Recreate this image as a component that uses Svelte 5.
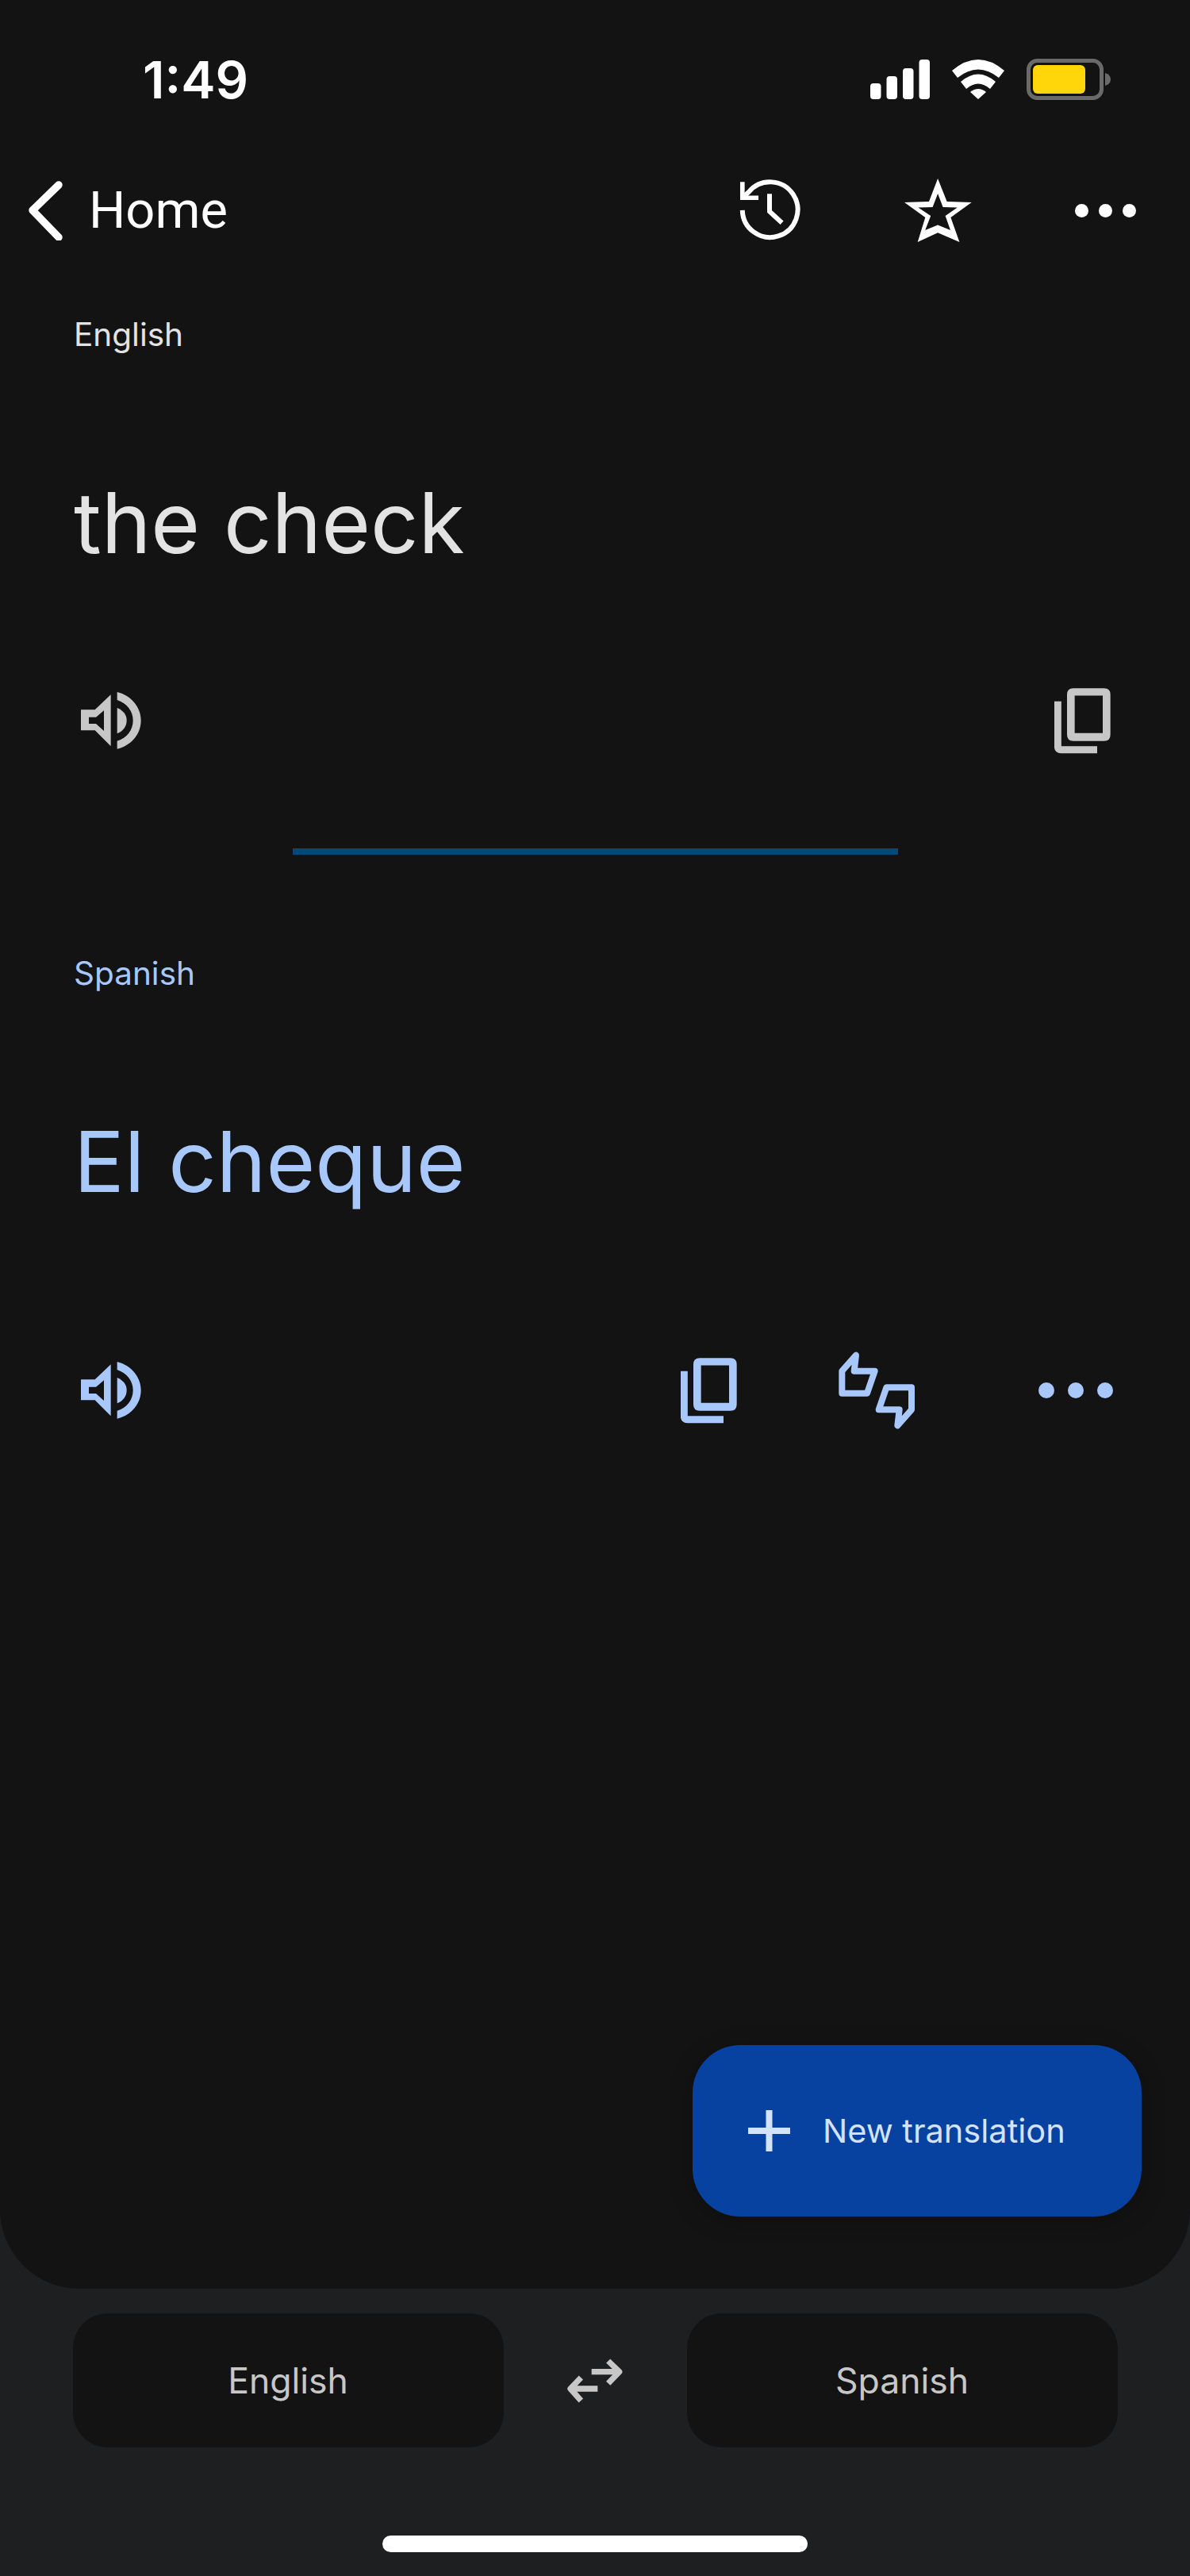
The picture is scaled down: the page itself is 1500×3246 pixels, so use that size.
<script lang="ts">
  const sourceColor = '#c7c7c7';
  const targetColor = '#a8c7fa';
</script>

{#snippet speaker(color: string)}
  <svg class="speaker" viewBox="305 215 228 216" style:color={color}>
    <path fill="currentColor" fill-rule="evenodd" d="M305 282H358L418 225V420L358 360H305ZM335 310V335H362L392 362V285L362 310Z" />
    <path fill="currentColor" d="M442 275C466 285 478 302 478 322C478 344 466 362 442 372Z" />
    <path fill="currentColor" d="M442 215C495 228 532 272 532 322C532 374 495 418 442 430V400C480 388 502 358 502 322C502 288 480 258 442 245Z" />
  </svg>
{/snippet}

{#snippet copy(color: string)}
  <svg class="copy" viewBox="385 142 213 248" style:color={color}>
    <path fill="currentColor" fill-rule="evenodd" d="M457 142H573Q597 142 597 166V318Q597 342 573 342H457Q433 342 433 318V166Q433 142 457 142ZM462 170V312H568V170Z" />
    <path fill="none" stroke="currentColor" stroke-width="27" d="M398 192V362Q398 375 411 375H547" />
  </svg>
{/snippet}

<div class="page">
  <div class="sheet">
    <div class="status">
      <span class="time">1:49</span>
      <div class="status-icons">
        <svg class="signal" viewBox="0 0 75 50" fill="#fff">
          <rect x="0" y="30" width="13.5" height="20" rx="4" />
          <rect x="20.5" y="21" width="13.5" height="29" rx="4" />
          <rect x="41" y="11" width="13.5" height="39" rx="4" />
          <rect x="61.5" y="0" width="13.5" height="50" rx="4" />
        </svg>
        <svg class="wifi" viewBox="0 0 66 50" fill="#fff">
          <path d="M0 14Q33 -14 66 14L59 23Q33 2 7 23Z" />
          <path d="M11 28Q33 9 55 28L48 37Q33 24 18 37Z" />
          <path d="M23 41Q33 33 43 41L33 50Z" />
        </svg>
        <svg class="battery" viewBox="0 0 106 52">
          <rect x="2.5" y="2.5" width="92" height="47" rx="11" fill="none" stroke="#6a6a6a" stroke-width="5" />
          <rect x="8" y="8" width="66" height="36" rx="6" fill="#ffd60a" />
          <path d="M99 18Q106 20 106 26Q106 32 99 34Z" fill="#6a6a6a" />
        </svg>
      </div>
    </div>

    <div class="nav">
      <svg class="chevron" viewBox="0 0 43 75">
        <path d="M38 5L5 37L38 71" fill="none" stroke="#fff" stroke-width="9.5" stroke-linecap="round" stroke-linejoin="round" />
      </svg>
      <span class="home">Home</span>
      <div class="nav-icons">
        <svg class="history" viewBox="30 35 240 235" fill="none" stroke="#fff">
          <path stroke-width="18" d="M47 152A105 105 0 1 0 72 82L50 102" />
          <path stroke-width="17" d="M47 45V105H108" />
          <path stroke-width="18" d="M150 90V157L197 200" />
        </svg>
        <svg class="star" viewBox="0 0 85 80">
          <path fill="#fff" fill-rule="evenodd" d="M42.1 0L53.6 29L84.7 30L58.4 49L69.4 80L42.1 68.3L16.7 80L26.3 49L0 30L31 29ZM42.1 19L35.6 36L17.5 36.5L33.2 47L26.2 65L42.1 58.5L58 65L51.6 47L66.7 36.5L48.6 36Z" />
        </svg>
        <div class="dots white"><i></i><i></i><i></i></div>
      </div>
    </div>

    <section class="source">
      <div class="label">English</div>
      <div class="phrase">the check</div>
      <div class="actions">
        {@render speaker(sourceColor)}
        {@render copy(sourceColor)}
      </div>
    </section>

    <div class="divider"></div>

    <section class="target">
      <div class="label">Spanish</div>
      <div class="phrase">El cheque</div>
      <div class="actions">
        {@render speaker(targetColor)}
        <div class="target-tools">
          {@render copy(targetColor)}
          <svg class="thumbs" viewBox="0 0 360 330" fill="none" stroke="currentColor" stroke-width="24" stroke-linejoin="round">
            <path d="M52 92L105 32L98 92H176L147 176H52Z" />
            <path transform="rotate(180 183.5 165)" d="M52 92L105 32L98 92H176L147 176H52Z" />
          </svg>
          <div class="dots blue"><i></i><i></i><i></i></div>
        </div>
      </div>
    </section>

    <button class="fab">
      <svg class="plus" viewBox="0 0 53 52">
        <path d="M0 26H53M26.5 0V52" stroke="#d3e3fd" stroke-width="8" fill="none" />
      </svg>
      <span>New translation</span>
    </button>
  </div>

  <div class="footer">
    <div class="languages">
      <div class="lang">English</div>
      <svg class="swap" viewBox="0 0 300 240" fill="none" stroke="#c7c7c7" stroke-width="22" stroke-linejoin="round">
        <path d="M137 86H240M200 45L242 86L200 130" />
        <path d="M160 150H60M97 108L57 150L97 195" />
      </svg>
      <div class="lang">Spanish</div>
    </div>
    <div class="home-bar"></div>
  </div>
</div>

<style>
  :global(body) {
    background: #1e1f20;
  }

  .page {
    width: 1500px;
    height: 3246px;
    display: flex;
    flex-direction: column;
    background: #1e1f20;
    font-family: Inter, "Noto Sans", sans-serif;
    overflow: hidden;
  }

  .sheet {
    position: relative;
    height: 2884px;
    background: #131314;
    border-radius: 0 0 100px 100px;
  }

  /* status bar */
  .status {
    height: 200px;
    display: flex;
    align-items: center;
    justify-content: space-between;
    padding: 0 100px 0 180px;
    box-sizing: border-box;
  }

  .time {
    font-size: 65px;
    font-weight: 600;
    line-height: 1;
    color: #fff;
  }

  .status-icons {
    display: flex;
    align-items: center;
    gap: 28px;
  }

  .signal { width: 75px; height: 50px; }
  .wifi { width: 66px; height: 50px; }
  .battery { width: 106px; height: 52px; }

  /* nav */
  .nav {
    height: 130px;
    display: flex;
    align-items: center;
    padding: 0 68px 0 36px;
  }

  .chevron { width: 43px; height: 75px; }

  .home {
    margin-left: 33px;
    font-family: Roboto, sans-serif;
    font-size: 65px;
    font-weight: 400;
    color: #fff;
  }

  .nav-icons {
    margin-left: auto;
    display: flex;
    align-items: center;
    gap: 130px;
  }

  .history { width: 80px; height: 78px; }
  .star { width: 85px; height: 80px; }

  .dots {
    display: flex;
  }

  .dots i {
    display: block;
    border-radius: 50%;
  }

  .dots.white { gap: 13px; }
  .dots.white i { width: 17px; height: 17px; background: #fff; }
  .dots.blue { gap: 17px; }
  .dots.blue i { width: 20px; height: 20px; background: #a8c7fa; }

  /* text blocks */
  section {
    padding: 0 93px;
  }

  .source { padding-top: 62px; }
  .target { padding-top: 120px; color: #a8c7fa; }

  .label {
    font-size: 40.5px;
    line-height: 60px;
    color: #e3e3e3;
  }

  .target .label { color: #a8c7fa; }

  .phrase {
    margin-top: 137px;
    font-size: 106px;
    line-height: 140px;
    color: #e3e3e3;
  }

  .target .phrase { color: #a8c7fa; }

  .actions {
    display: flex;
    align-items: center;
    justify-content: space-between;
    height: 100px;
    margin-top: 129px;
    padding: 0 7px 0 9px;
  }

  .target .actions { margin-top: 168px; color: #a8c7fa; }

  .speaker { width: 76px; height: 72px; }
  .copy { width: 71px; height: 83px; }
  .thumbs { width: 120px; height: 110px; margin: 0 -11px 0 115px; }

  .target-tools {
    display: flex;
    align-items: center;
    margin-right: -3px;
  }

  .target-tools .dots { margin-left: 156px; }

  .divider {
    width: 763px;
    height: 8px;
    margin: 111px auto 0 369px;
    background: #004a77;
  }

  /* fab */
  .fab {
    position: absolute;
    right: 61px;
    bottom: 91px;
    width: 566px;
    height: 216px;
    display: flex;
    align-items: center;
    gap: 41px;
    padding: 0 0 0 70px;
    border: none;
    border-radius: 60px;
    background: #0842a0;
    color: #d3e3fd;
    font-family: inherit;
    font-size: 41.5px;
    box-shadow: 0 6px 30px rgba(0, 0, 0, 0.25);
  }

  .plus { width: 53px; height: 52px; }

  /* footer */
  .footer {
    flex: 1;
    display: flex;
    flex-direction: column;
    align-items: center;
    padding-top: 31px;
  }

  .languages {
    width: 1317px;
    display: grid;
    grid-template-columns: 543px 1fr 543px;
    align-items: center;
    justify-items: center;
  }

  .lang {
    width: 100%;
    height: 169px;
    display: flex;
    align-items: center;
    justify-content: center;
    border-radius: 44px;
    background: #131314;
    color: #c7c7c7;
    font-size: 44.5px;
  }

  .swap { width: 100px; height: 80px; }

  .home-bar {
    width: 536px;
    height: 21px;
    margin-top: 111px;
    border-radius: 11px;
    background: #fff;
  }
</style>
